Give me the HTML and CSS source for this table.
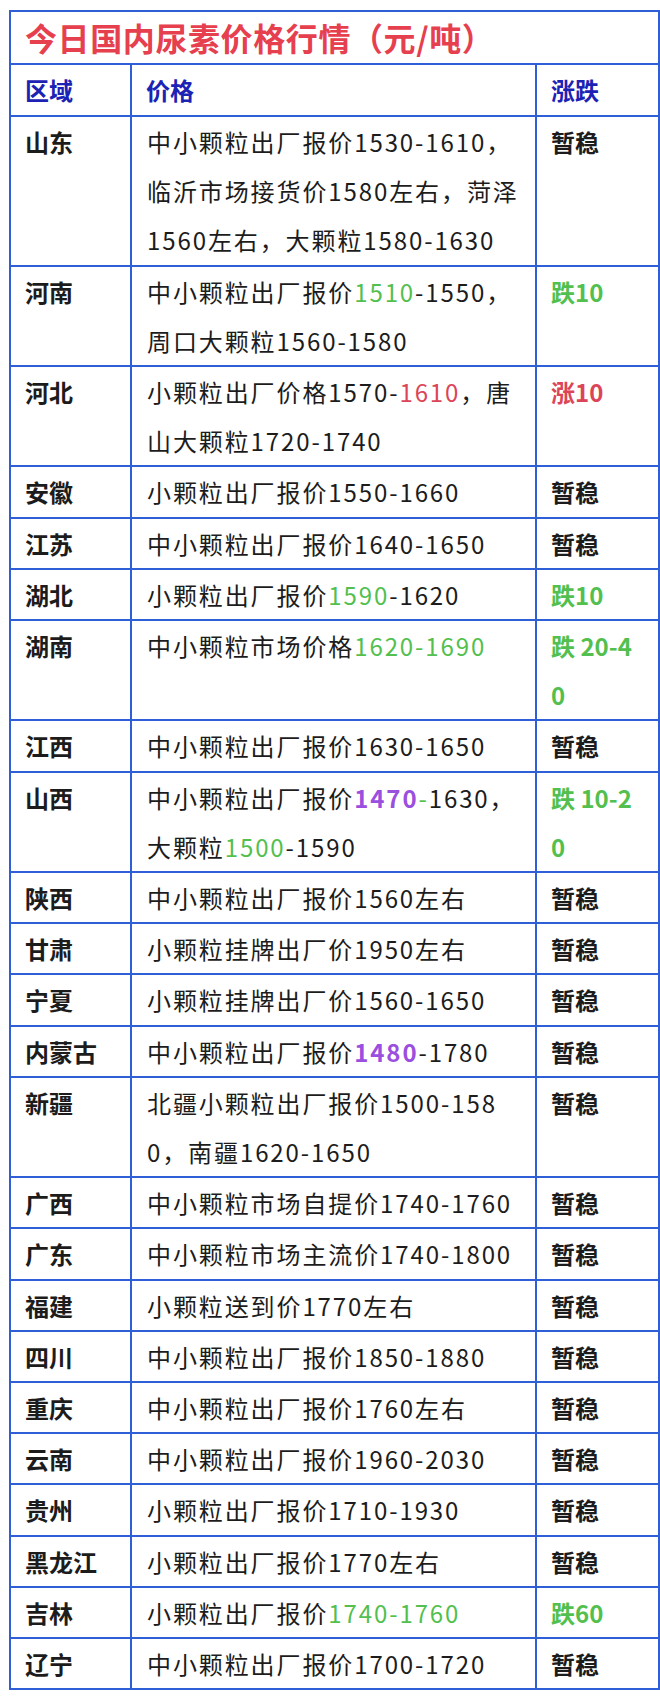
FILE: index.html
```html
<!DOCTYPE html>
<html lang="zh-CN">
<head>
<meta charset="utf-8">
<title>今日国内尿素价格行情</title>
<link rel="stylesheet" href="styles.css">
</head>
<body>
<table class="price-table">
  <colgroup>
    <col class="c-region">
    <col class="c-price">
    <col class="c-change">
  </colgroup>
  <thead>
    <tr><th class="title" colspan="3">今日国内尿素价格行情（元/吨）</th></tr>
    <tr class="head"><th>区域</th><th>价格</th><th>涨跌</th></tr>
  </thead>
  <tbody>
    <tr><td class="region">山东</td><td class="price">中小颗粒出厂报价1530-1610，<br>临沂市场接货价1580左右，菏泽<br>1560左右，大颗粒1580-1630</td><td class="chg">暂稳</td></tr>
    <tr><td class="region">河南</td><td class="price">中小颗粒出厂报价<span class="g">1510</span>-1550，<br>周口大颗粒1560-1580</td><td class="chg g">跌10</td></tr>
    <tr><td class="region">河北</td><td class="price">小颗粒出厂价格1570-<span class="r">1610</span>，唐<br>山大颗粒1720-1740</td><td class="chg r">涨10</td></tr>
    <tr><td class="region">安徽</td><td class="price">小颗粒出厂报价1550-1660</td><td class="chg">暂稳</td></tr>
    <tr><td class="region">江苏</td><td class="price">中小颗粒出厂报价1640-1650</td><td class="chg">暂稳</td></tr>
    <tr><td class="region">湖北</td><td class="price">小颗粒出厂报价<span class="g">1590</span>-1620</td><td class="chg g">跌10</td></tr>
    <tr><td class="region">湖南</td><td class="price">中小颗粒市场价格<span class="g">1620-1690</span></td><td class="chg g">跌 20-4<br>0</td></tr>
    <tr><td class="region">江西</td><td class="price">中小颗粒出厂报价1630-1650</td><td class="chg">暂稳</td></tr>
    <tr><td class="region">山西</td><td class="price">中小颗粒出厂报价<span class="p">1470</span><span class="g">-</span>1630，<br>大颗粒<span class="g">1500</span>-1590</td><td class="chg g">跌 10-2<br>0</td></tr>
    <tr><td class="region">陕西</td><td class="price">中小颗粒出厂报价1560左右</td><td class="chg">暂稳</td></tr>
    <tr><td class="region">甘肃</td><td class="price">小颗粒挂牌出厂价1950左右</td><td class="chg">暂稳</td></tr>
    <tr><td class="region">宁夏</td><td class="price">小颗粒挂牌出厂价1560-1650</td><td class="chg">暂稳</td></tr>
    <tr><td class="region">内蒙古</td><td class="price">中小颗粒出厂报价<span class="p">1480</span>-1780</td><td class="chg">暂稳</td></tr>
    <tr><td class="region">新疆</td><td class="price">北疆小颗粒出厂报价1500-158<br>0，南疆1620-1650</td><td class="chg">暂稳</td></tr>
    <tr><td class="region">广西</td><td class="price">中小颗粒市场自提价1740-1760</td><td class="chg">暂稳</td></tr>
    <tr><td class="region">广东</td><td class="price">中小颗粒市场主流价1740-1800</td><td class="chg">暂稳</td></tr>
    <tr><td class="region">福建</td><td class="price">小颗粒送到价1770左右</td><td class="chg">暂稳</td></tr>
    <tr><td class="region">四川</td><td class="price">中小颗粒出厂报价1850-1880</td><td class="chg">暂稳</td></tr>
    <tr><td class="region">重庆</td><td class="price">中小颗粒出厂报价1760左右</td><td class="chg">暂稳</td></tr>
    <tr><td class="region">云南</td><td class="price">中小颗粒出厂报价1960-2030</td><td class="chg">暂稳</td></tr>
    <tr><td class="region">贵州</td><td class="price">小颗粒出厂报价1710-1930</td><td class="chg">暂稳</td></tr>
    <tr><td class="region">黑龙江</td><td class="price">小颗粒出厂报价1770左右</td><td class="chg">暂稳</td></tr>
    <tr><td class="region">吉林</td><td class="price">小颗粒出厂报价<span class="g">1740-1760</span></td><td class="chg g">跌60</td></tr>
    <tr><td class="region">辽宁</td><td class="price">中小颗粒出厂报价1700-1720</td><td class="chg">暂稳</td></tr>
  </tbody>
</table>
</body>
</html>
```

FILE: styles.css
```css
html, body {
  margin: 0;
  padding: 0;
  background: #ffffff;
}

body {
  font-family: "Noto Sans CJK SC", "Noto Sans", sans-serif;
  color: #1c1c1c;
}

.price-table {
  margin: 10px 0 0 9px;
  width: 649px;
  border-collapse: collapse;
  table-layout: fixed;
}

.c-region { width: 121px; }
.c-price { width: 405px; }
.c-change { width: 123px; }

.price-table th,
.price-table td {
  border: 2px solid #2f5fd6;
  padding: 0 6px 0 14px;
  text-align: left;
  vertical-align: top;
  word-break: break-all;
}

.title {
  height: 51px;
  line-height: 50px;
  font-size: 32px;
  letter-spacing: 0.6px;
  font-weight: 700;
  color: #e6404f;
  vertical-align: middle;
}

.head th {
  height: 50px;
  line-height: 50px;
  font-size: 24px;
  font-weight: 700;
  color: #1c22b4;
  vertical-align: middle;
}

.price-table td {
  font-size: 24px;
  line-height: 49.2px;
}

.price-table td.price {
  padding-left: 15px;
  letter-spacing: 1.9px;
}

.region,
.chg {
  font-weight: 700;
}

.g { color: #52bf4e; }
.r { color: #dc4457; }
.p { color: #9a4fde; font-weight: 700; }
```
